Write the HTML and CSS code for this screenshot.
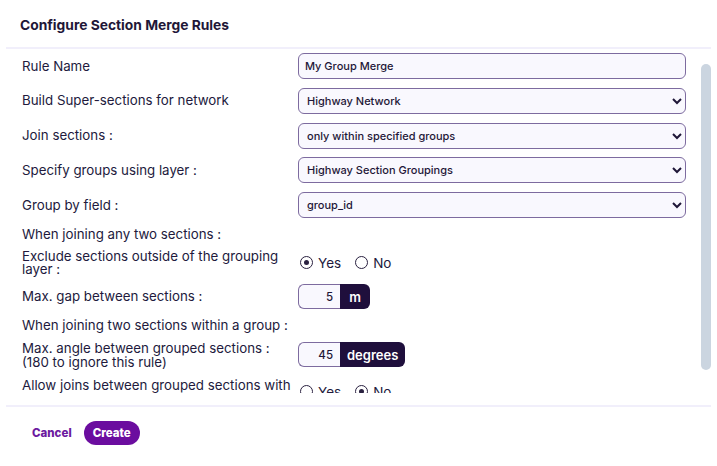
FILE: index.html
```html
<!DOCTYPE html>
<html lang="en">
<head>
    <meta charset="UTF-8">
    <meta name="viewport" content="width=device-width, initial-scale=1.0">
    <title>Configure Section Merge Rules</title>
    <link rel="stylesheet" href="styles.css">
</head>
<body>
    <div class="dialog">
        <div class="dialog-header">
            <h2>Configure Section Merge Rules</h2>
        </div>

        <div class="dialog-body">
            <div class="form-grid">
                <label class="label">Rule Name</label>
                <input class="field" type="text" value="My Group Merge">

                <label class="label">Build Super-sections for network</label>
                <select class="field">
                    <option>Highway Network</option>
                </select>

                <label class="label">Join sections :</label>
                <select class="field">
                    <option>only within specified groups</option>
                </select>

                <label class="label">Specify groups using layer :</label>
                <select class="field">
                    <option>Highway Section Groupings</option>
                </select>

                <label class="label">Group by field :</label>
                <select class="field">
                    <option>group_id</option>
                </select>

                <div class="label heading">When joining any two sections :</div>

                <label class="label tighter">Exclude sections outside of the grouping layer :</label>
                <div class="radios">
                    <label class="radio"><input type="radio" name="exclude" checked> Yes</label>
                    <label class="radio"><input type="radio" name="exclude"> No</label>
                </div>

                <label class="label">Max. gap between sections :</label>
                <div class="input-group">
                    <input class="num" type="text" value="5">
                    <span class="addon">m</span>
                </div>

                <div class="label heading">When joining two sections within a group :</div>

                <label class="label tight">Max. angle between grouped sections :<br>(180 to ignore this rule)</label>
                <div class="input-group">
                    <input class="num" type="text" value="45">
                    <span class="addon">degrees</span>
                </div>

                <label class="label tight">Allow joins between grouped sections with other parts of the same group :</label>
                <div class="radios">
                    <label class="radio"><input type="radio" name="allow"> Yes</label>
                    <label class="radio"><input type="radio" name="allow" checked> No</label>
                </div>
            </div>

            <!-- scrollbar rail, drawn since the headless browser hides native ones -->
            <div class="scrollbar">
                <div class="scroll-thumb"></div>
            </div>
        </div>

        <div class="dialog-footer">
            <button class="btn-link">Cancel</button>
            <button class="btn-primary">Create</button>
        </div>
    </div>
</body>
</html>
```

FILE: styles.css
```css
body {
    margin: 0;
    background: #ffffff;
    color: #221a3d;
    font-family: Inter, "Noto Sans", sans-serif;
    overflow: hidden;
}

.dialog {
    padding: 0 6px;
    height: 466px;
    display: flex;
    flex-direction: column;
}

.dialog-header {
    height: 45px;
    display: flex;
    align-items: center;
    padding: 2px 14px 0;
    border-bottom: 2px solid #f1effb;
}

.dialog-header h2 {
    margin: 0;
    font-size: 13.8px;
    font-weight: 700;
    color: #1f1738;
}

.dialog-body {
    height: 344px;
    display: flex;
    overflow: hidden;
}

.form-grid {
    flex: 1;
    display: grid;
    grid-template-columns: 276px 1fr;
    align-items: center;
    align-content: start;
    row-gap: 8.75px;
    padding: 4px 15px 20px 16px;
}

.scrollbar {
    width: 10px;
    padding-top: 15px;
}

.scroll-thumb {
    height: 306px;
    background: #cbd5e0;
    border-radius: 5px;
}

.label {
    font-size: 13.3px;
    line-height: 17px;
}

.label.tight {
    line-height: 14px;
}

.label.tighter {
    line-height: 13px;
}

.heading {
    grid-column: 1 / -1;
    line-height: 14px;
}

.field {
    box-sizing: border-box;
    height: 26px;
    width: 100%;
    border: 1px solid #7d6b9f;
    border-radius: 6px;
    background-color: #f9f8fe;
    color: #1f1738;
    font-family: Inter, "Noto Sans", sans-serif;
    font-size: 11px;
    font-weight: 500;
    padding: 0 6px;
}

select.field {
    padding: 0 4px;
}

.radios {
    display: flex;
    gap: 14px;
    padding-left: 2px;
}

.radio {
    display: flex;
    align-items: center;
    gap: 5px;
    font-size: 13.5px;
}

.radio input {
    appearance: none;
    margin: 0;
    width: 13px;
    height: 13px;
    border: 1.5px solid #2a2140;
    border-radius: 50%;
    display: grid;
    place-items: center;
    background: #ffffff;
}

.radio input:checked::after {
    content: "";
    width: 5px;
    height: 5px;
    border-radius: 50%;
    background: #2a2140;
}

.input-group {
    display: flex;
    height: 25px;
}

.num {
    box-sizing: border-box;
    width: 42px;
    height: 100%;
    border: 1px solid #7d6b9f;
    border-right: none;
    border-radius: 6px 0 0 6px;
    background: #f9f8fe;
    text-align: right;
    padding: 0 7px;
    font-family: Inter, "Noto Sans", sans-serif;
    font-size: 11.5px;
    font-weight: 500;
    color: #1f1738;
}

.addon {
    display: flex;
    align-items: center;
    justify-content: center;
    min-width: 16px;
    background: #1f0f3c;
    color: #ffffff;
    font-size: 13px;
    font-weight: 600;
    padding: 0 7px;
    border-radius: 0 6px 6px 0;
}

.dialog-footer {
    margin-top: 12px;
    border-top: 2px solid #f1effb;
    display: flex;
    align-items: center;
    gap: 12px;
    padding: 14px 0 0 26px;
}

.btn-link,
.btn-primary {
    font-family: Inter, "Noto Sans", sans-serif;
    font-size: 11.5px;
    font-weight: 800;
    border: none;
    cursor: pointer;
}

.btn-link {
    background: none;
    color: #6c1aa0;
    padding: 0;
}

.btn-primary {
    background: #6b0d9f;
    color: #ffffff;
    height: 24px;
    padding: 0 9px;
    border-radius: 12px;
}
```
